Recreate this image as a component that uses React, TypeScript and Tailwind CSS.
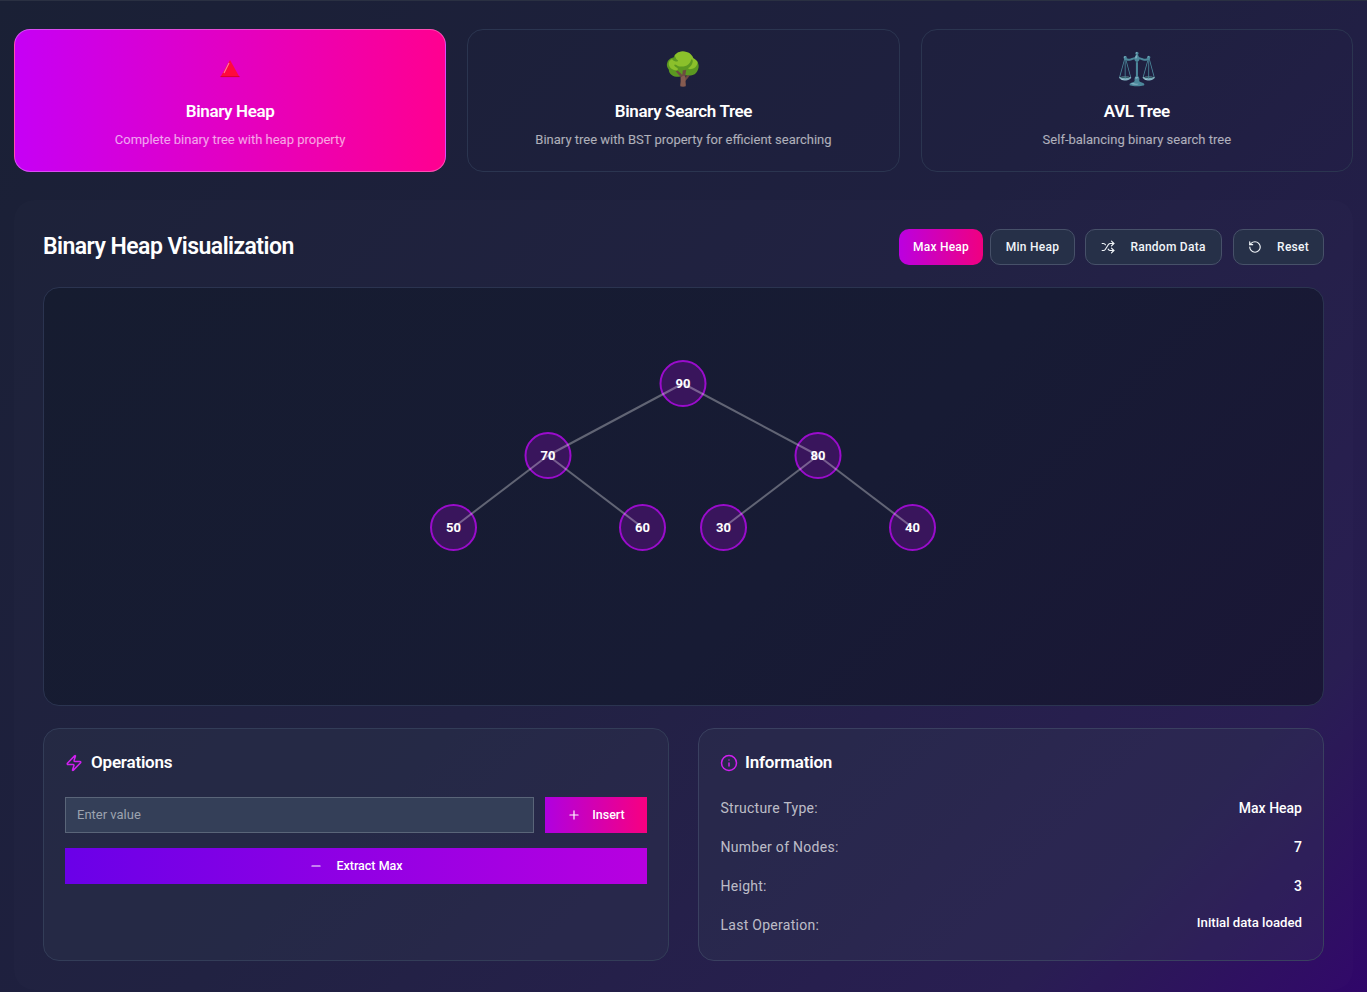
import { Info, Minus, Plus, RotateCcw, Shuffle, Zap } from 'lucide-react'

const structures = [
  { icon: 'heap', title: 'Binary Heap', desc: 'Complete binary tree with heap property', active: true },
  { icon: '🌳', title: 'Binary Search Tree', desc: 'Binary tree with BST property for efficient searching', active: false },
  { icon: '⚖️', title: 'AVL Tree', desc: 'Self-balancing binary search tree', active: false },
]

const nodes = [
  { value: 90, x: 639, y: 95.5 },
  { value: 70, x: 504, y: 167.5 },
  { value: 80, x: 774, y: 167.5 },
  { value: 50, x: 409.5, y: 239.5 },
  { value: 60, x: 598.5, y: 239.5 },
  { value: 30, x: 679.5, y: 239.5 },
  { value: 40, x: 868.5, y: 239.5 },
]

const edges = [
  [0, 1],
  [0, 2],
  [1, 3],
  [1, 4],
  [2, 5],
  [2, 6],
]

const info = [
  { label: 'Structure Type:', value: 'Max Heap' },
  { label: 'Number of Nodes:', value: '7' },
  { label: 'Height:', value: '3' },
  { label: 'Last Operation:', value: 'Initial data loaded', small: true },
]

// the red triangle emoji, drawn so the red stays as saturated as the reference
function HeapIcon() {
  return (
    <svg className="mx-auto h-[40px] w-[20px]" viewBox="0 0 20 40">
      <polygon points="10,11 19.5,28 0.5,28" fill="#ff0a3c" />
      <line x1="0.5" y1="27.6" x2="19.5" y2="27.6" stroke="#d8002c" strokeWidth="0.9" />
      <line x1="9" y1="14" x2="4" y2="24" stroke="#ff7d9c" strokeWidth="1.1" />
    </svg>
  )
}

function StructureCard({ icon, title, desc, active }: (typeof structures)[number]) {
  return (
    <div
      className={
        active
          ? 'h-[143px] rounded-2xl border border-white/30 bg-[linear-gradient(90deg,#c600f5,#ff0090)] pt-[19px] text-center'
          : 'h-[143px] rounded-2xl border border-[#2b3550] bg-white/[0.005] pt-[19px] text-center'
      }
    >
      <div className="h-[40px] text-[32px] leading-[40px]">{icon === 'heap' ? <HeapIcon /> : icon}</div>
      <h3 className="mt-[10px] text-[17px] leading-[24px] font-semibold tracking-[-0.35px] text-white">{title}</h3>
      <p className="mt-[7px] text-[13px] leading-[20px] text-white/65">{desc}</p>
    </div>
  )
}

function OutlineButton({ className, children }: { className: string; children: React.ReactNode }) {
  return (
    <button
      className={`flex h-[36px] items-center justify-center rounded-[10px] border border-[#475169] bg-[#263048] text-[12px] font-medium tracking-[0.25px] text-[#f1f5f9] ${className}`}
    >
      {children}
    </button>
  )
}

function TreeCanvas() {
  return (
    <div className="mt-[22px] h-[419px] rounded-2xl border border-[#2b3450] bg-[linear-gradient(135deg,#161c30,#171b34_60%,#1a1636)]">
      <svg className="h-full w-full" viewBox="0 0 1279 417">
        {nodes.map((n) => (
          <circle key={n.value} cx={n.x} cy={n.y} r="22.5" fill="#39155c" stroke="#9a0ccc" strokeWidth="2" />
        ))}
        {edges.map(([a, b]) => (
          <line
            key={`${a}-${b}`}
            x1={nodes[a].x}
            y1={nodes[a].y}
            x2={nodes[b].x}
            y2={nodes[b].y}
            stroke="#ffffff"
            strokeOpacity="0.32"
            strokeWidth="2"
          />
        ))}
        {nodes.map((n) => (
          <text
            key={n.value}
            x={n.x}
            y={n.y + 4.5}
            textAnchor="middle"
            fill="#ffffff"
            fontSize="13"
            fontWeight="700"
          >
            {n.value}
          </text>
        ))}
      </svg>
    </div>
  )
}

export default function App() {
  return (
    <div className="min-h-[992px] border-t border-[#2a3042] bg-[linear-gradient(135deg,#1a2035_0%,#1f2040_50%,#271c50_85%,#30066a_100%)] px-[14px] pt-[28px] font-['Roboto',sans-serif]">
      <div className="grid grid-cols-3 gap-[21px]">
        {structures.map((s) => (
          <StructureCard key={s.title} {...s} />
        ))}
      </div>

      <main className="mt-[28px] h-[790px] rounded-[20px] bg-white/[0.012] p-[29px]">
        <div className="flex h-[36px] items-center justify-between">
          <h2 className="text-[23px] font-semibold tracking-[-0.55px] text-white">Binary Heap Visualization</h2>
          <div className="flex items-center">
            <button className="mr-[7px] h-[36px] w-[84px] rounded-[10px] bg-[linear-gradient(90deg,#bb00e0,#f00080)] text-[12px] font-medium tracking-[0.25px] text-white">
              Max Heap
            </button>
            <OutlineButton className="w-[85px]">Min Heap</OutlineButton>
            <OutlineButton className="ml-[10px] w-[137px]">
              <Shuffle className="mr-[15px] h-[14px] w-[14px]" />
              Random Data
            </OutlineButton>
            <OutlineButton className="ml-[11px] w-[91px]">
              <RotateCcw className="mr-[15px] h-[14px] w-[14px]" />
              Reset
            </OutlineButton>
          </div>
        </div>

        <TreeCanvas />

        <div className="mt-[22px] grid grid-cols-2 gap-[29px]">
          <section className="h-[233px] rounded-2xl border border-[#333d58] bg-[#334155]/25 p-[21px]">
            <h3 className="flex h-[24px] translate-y-[1px] items-center text-[17px] font-semibold tracking-[-0.2px] text-white">
              <Zap className="mr-[8px] h-[18px] w-[18px] text-[#d020f0]" />
              Operations
            </h3>
            <div className="mt-[23px] flex gap-[11px]">
              <input
                placeholder="Enter value"
                className="h-[36px] min-w-0 flex-1 border border-[#5a6579] bg-[#343f58] px-[11px] pb-[2px] text-[13px] text-white outline-none placeholder:text-[#9ca3af]"
              />
              <button className="flex h-[36px] w-[102px] items-center justify-center bg-[linear-gradient(90deg,#b000e0,#f80080)] text-[12.5px] font-medium text-white">
                <Plus className="mr-[11px] h-[14px] w-[14px]" />
                Insert
              </button>
            </div>
            <button className="mt-[15px] flex h-[36px] w-full items-center justify-center bg-[linear-gradient(90deg,#6a00e8,#b800e0)] text-[12.5px] font-medium text-white">
              <Minus className="mr-[13px] h-[14px] w-[14px]" />
              Extract Max
            </button>
          </section>

          <section className="h-[233px] rounded-2xl border border-[#3a4060] bg-[#334155]/25 p-[21px]">
            <h3 className="flex h-[24px] translate-y-[1px] items-center text-[17px] font-semibold tracking-[-0.2px] text-white">
              <Info className="mr-[7px] h-[18px] w-[18px] text-[#d020f0]" />
              Information
            </h3>
            <dl className="mt-[24px] flex flex-col gap-[19px]">
              {info.map((row) => (
                <div key={row.label} className="flex h-[20px] items-start justify-between">
                  <dt className="translate-x-[0.5px] text-[14px] leading-[20px] tracking-[0.27px] text-white/70">{row.label}</dt>
                  <dd className={row.small ? 'text-[13.2px] leading-[16px] font-medium text-white' : 'text-[14px] leading-[20px] font-medium text-white'}>
                    {row.value}
                  </dd>
                </div>
              ))}
            </dl>
          </section>
        </div>
      </main>
    </div>
  )
}
